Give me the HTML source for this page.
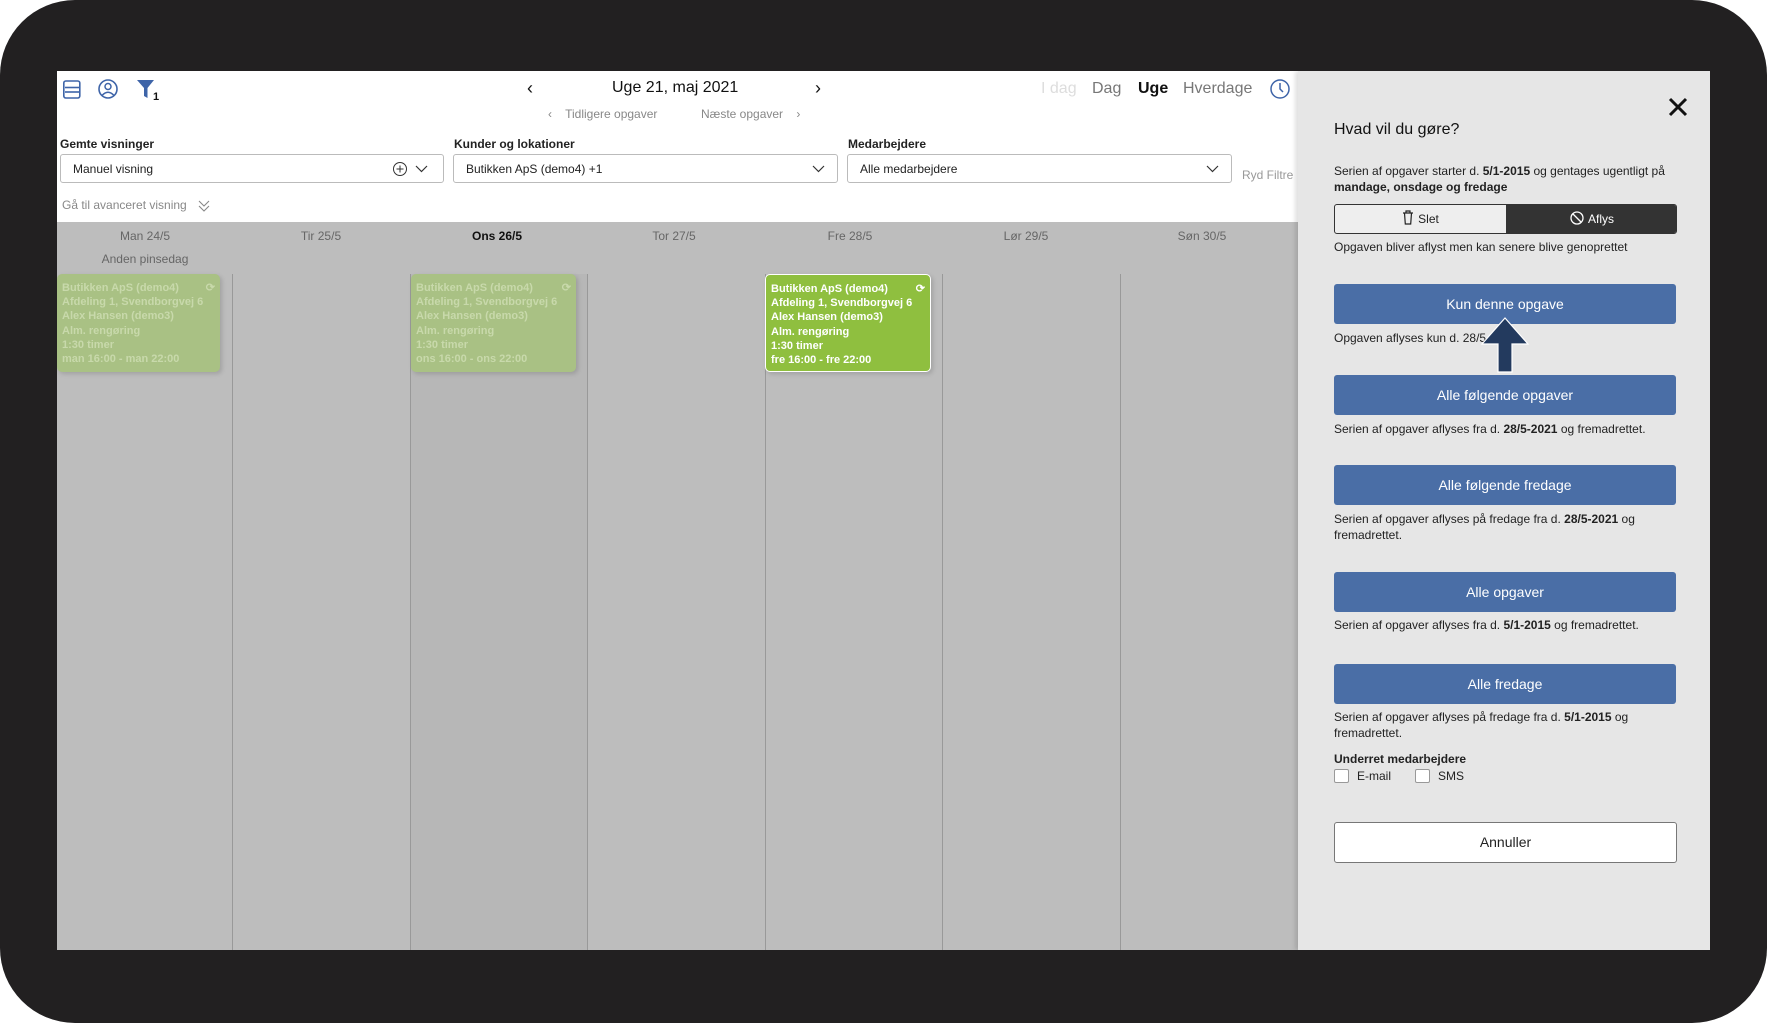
<!DOCTYPE html>
<html><head><meta charset="utf-8">
<style>
*{box-sizing:border-box;margin:0;padding:0}
body{width:1767px;height:1023px;background:#fff;position:relative;overflow:hidden;font-family:"Liberation Sans",sans-serif;color:#222}
.frame{position:absolute;left:0;top:0;width:1767px;height:1023px;background:#222021;border-radius:75px}
.abs{position:absolute;white-space:nowrap}
.screen{position:absolute;left:57px;top:71px;width:1653px;height:879px;background:#fff;overflow:hidden}
.main{position:absolute;left:0;top:0;width:1241px;height:879px;background:#fff}
.cal{position:absolute;left:0;top:151px;width:1241px;height:728px;background:#bdbdbd}
.lbl{font-size:12px;font-weight:bold;color:#222}
.sel{position:absolute;top:83px;height:29px;border:1px solid #bbb;border-radius:3px;background:#fff;font-size:12px;padding:7px 12px;color:#222}
.chev{position:absolute;right:10px;top:6px}
.day{position:absolute;top:158px;width:176px;text-align:center;font-size:12px;color:#666}
.div{position:absolute;top:203px;width:1px;height:676px;background:#999}
.ev{position:absolute;top:203px;height:98px;border-radius:5px;padding:7px 5px;font-size:11px;line-height:14.2px;font-weight:bold;white-space:nowrap;overflow:hidden;box-shadow:2px 2px 5px rgba(0,0,0,.15)}
.fade{background:#a9c184;color:#c8d9ab}
.act{background:#8fbf3f;color:#fff;border:1px solid #fff}
.side{position:absolute;left:1241px;top:0;width:412px;height:879px;background:#e6e6e6;box-shadow:-3px 0 4px rgba(0,0,0,.12)}
.st{font-size:12px;color:#222;position:absolute;left:36px;white-space:nowrap;line-height:16px}
.btn{position:absolute;left:36px;width:342px;height:40px;background:#4a6ea6;border-radius:3px;color:#fff;font-size:14px;text-align:center;line-height:40px}
</style></head><body>
<div class="frame"></div>
<div class="screen">
<div class="main">
 <svg class="abs" style="left:6px;top:8px" width="100" height="24">
  <rect x="0.8" y="2" width="16" height="17" rx="2" fill="none" stroke="#3e64a8" stroke-width="1.6"/>
  <line x1="2" y1="8.5" x2="16" y2="8.5" stroke="#3e64a8" stroke-width="1.6"/><line x1="2" y1="13" x2="16" y2="13" stroke="#3e64a8" stroke-width="1.6"/>
  <circle cx="45" cy="10" r="9" fill="none" stroke="#3e64a8" stroke-width="1.6"/>
  <circle cx="45" cy="7.5" r="3" fill="none" stroke="#3e64a8" stroke-width="1.5"/>
  <path d="M39 16.5 Q45 10 51 16.5" fill="none" stroke="#3e64a8" stroke-width="1.5"/>
  <path d="M74 1 H91 L84.5 9 V19 L81 17 V9 Z" fill="#3e64a8"/>
  <text x="90" y="21" font-size="11" font-weight="bold" fill="#111" font-family="Liberation Sans">1</text>
 </svg>
 <div class="abs" style="left:470px;top:7px;font-size:18px;color:#111">‹</div>
 <div class="abs" style="left:555px;top:8px;font-size:16px;color:#111">Uge 21, maj 2021</div>
 <div class="abs" style="left:758px;top:7px;font-size:18px;color:#111">›</div>
 <div class="abs" style="left:491px;top:36px;font-size:12px;color:#888">‹&nbsp;&nbsp;&nbsp; Tidligere opgaver</div>
 <div class="abs" style="left:644px;top:36px;font-size:12px;color:#888">Næste opgaver &nbsp;&nbsp;&nbsp;›</div>
 <div class="abs" style="left:984px;top:9px;font-size:16px;color:#ddd">I dag</div>
 <div class="abs" style="left:1035px;top:9px;font-size:16px;color:#777">Dag</div>
 <div class="abs" style="left:1081px;top:9px;font-size:16px;color:#111;font-weight:bold">Uge</div>
 <div class="abs" style="left:1126px;top:9px;font-size:16px;color:#777">Hverdage</div>
 <svg class="abs" style="left:1212px;top:7px" width="22" height="22"><circle cx="11" cy="11" r="9" fill="none" stroke="#3e64a8" stroke-width="1.5"/><path d="M11 5 V11 L14 14" fill="none" stroke="#3e64a8" stroke-width="1.5"/></svg>
 <div class="abs lbl" style="left:3px;top:66px">Gemte visninger</div>
 <div class="abs lbl" style="left:397px;top:66px">Kunder og lokationer</div>
 <div class="abs lbl" style="left:791px;top:66px">Medarbejdere</div>
 <div class="sel" style="left:3px;width:384px">Manuel visning
  <svg class="chev" width="40" height="16"><circle cx="7" cy="8" r="6.5" fill="none" stroke="#333" stroke-width="1"/><path d="M7 4.5V11.5M3.5 8H10.5" stroke="#333"/><path d="M23 5 L28.5 10.5 L34 5" fill="none" stroke="#333" stroke-width="1.2"/></svg></div>
 <div class="sel" style="left:396px;width:385px">Butikken ApS (demo4) +1
  <svg class="chev" width="16" height="16"><path d="M2 5 L7.5 10.5 L13 5" fill="none" stroke="#333" stroke-width="1.2"/></svg></div>
 <div class="sel" style="left:790px;width:385px">Alle medarbejdere
  <svg class="chev" width="16" height="16"><path d="M2 5 L7.5 10.5 L13 5" fill="none" stroke="#333" stroke-width="1.2"/></svg></div>
 <div class="abs" style="left:1185px;top:97px;font-size:12px;color:#999">Ryd Filtre</div>
 <div class="abs" style="left:5px;top:127px;font-size:12px;color:#888">Gå til avanceret visning</div>
 <svg class="abs" style="left:140px;top:128px" width="14" height="14"><path d="M2 2 L7 7 L12 2 M2 7 L7 12 L12 7" fill="none" stroke="#888" stroke-width="1.1"/></svg>
 <div class="cal">
  <div style="position:absolute;left:354px;top:52px;width:177px;height:676px;background:#b7b7b7"></div>
 </div>
 <div class="day" style="left:0">Man 24/5</div>
 <div class="day" style="left:176px">Tir 25/5</div>
 <div class="day" style="left:352px;color:#111;font-weight:bold">Ons 26/5</div>
 <div class="day" style="left:529px">Tor 27/5</div>
 <div class="day" style="left:705px">Fre 28/5</div>
 <div class="day" style="left:881px">Lør 29/5</div>
 <div class="day" style="left:1057px">Søn 30/5</div>
 <div class="day" style="left:0;top:181px">Anden pinsedag</div>
 <div class="div" style="left:175px"></div><div class="div" style="left:353px"></div><div class="div" style="left:530px"></div>
 <div class="div" style="left:708px"></div><div class="div" style="left:885px"></div><div class="div" style="left:1063px"></div>
 <div class="ev fade" style="left:0;width:163px">Butikken ApS (demo4)<span style="float:right">⟳</span><br>Afdeling 1, Svendborgvej 6<br>Alex Hansen (demo3)<br>Alm. rengøring<br>1:30 timer<br>man 16:00 - man 22:00</div>
 <div class="ev fade" style="left:354px;width:165px">Butikken ApS (demo4)<span style="float:right">⟳</span><br>Afdeling 1, Svendborgvej 6<br>Alex Hansen (demo3)<br>Alm. rengøring<br>1:30 timer<br>ons 16:00 - ons 22:00</div>
 <div class="ev act" style="left:708px;width:166px">Butikken ApS (demo4)<span style="float:right">⟳</span><br>Afdeling 1, Svendborgvej 6<br>Alex Hansen (demo3)<br>Alm. rengøring<br>1:30 timer<br>fre 16:00 - fre 22:00</div>
</div>
<div class="side">
 <svg class="abs" style="left:370px;top:26px" width="20" height="20"><path d="M2 2L18 18M18 2L2 18" stroke="#111" stroke-width="3"/></svg>
 <div class="abs" style="left:36px;top:50px;font-size:16px;color:#111">Hvad vil du gøre?</div>
 <div class="st" style="top:92px">Serien af opgaver starter d. <b>5/1-2015</b> og gentages ugentligt på</div>
 <div class="st" style="top:108px"><b>mandage, onsdage og fredage</b></div>
 <div class="abs" style="left:36px;top:133px;width:343px;height:30px;border:1px solid #333;border-radius:3px;overflow:hidden;background:#eee">
  <div style="position:absolute;left:171px;top:0;width:172px;height:30px;background:#333;color:#fff;font-size:12px;line-height:29px;text-align:center"><svg width="14" height="14" style="vertical-align:-2px;margin-right:4px"><circle cx="7" cy="7" r="6" fill="none" stroke="#fff" stroke-width="1.3"/><path d="M3 3L11 11" stroke="#fff" stroke-width="1.3"/></svg>Aflys</div>
  <div style="position:absolute;left:0;top:0;width:171px;height:30px;font-size:12px;line-height:29px;text-align:center"><svg width="12" height="15" style="vertical-align:-2px;margin-right:4px"><path d="M1 3H11M4 3V1H8V3M2.5 3L3.3 14H8.7L9.5 3" fill="none" stroke="#222" stroke-width="1.2"/></svg>Slet</div>
 </div>
 <div class="st" style="top:168px">Opgaven bliver aflyst men kan senere blive genoprettet</div>
 <div class="btn" style="top:213px">Kun denne opgave</div>
 <div class="st" style="top:259px">Opgaven aflyses kun d. 28/5</div>
 <div class="btn" style="top:304px">Alle følgende opgaver</div>
 <div class="st" style="top:350px">Serien af opgaver aflyses fra d. <b>28/5-2021</b> og fremadrettet.</div>
 <div class="btn" style="top:394px">Alle følgende fredage</div>
 <div class="st" style="top:440px">Serien af opgaver aflyses på fredage fra d. <b>28/5-2021</b> og<br>fremadrettet.</div>
 <div class="btn" style="top:501px">Alle opgaver</div>
 <div class="st" style="top:546px">Serien af opgaver aflyses fra d. <b>5/1-2015</b> og fremadrettet.</div>
 <div class="btn" style="top:593px">Alle fredage</div>
 <div class="st" style="top:638px">Serien af opgaver aflyses på fredage fra d. <b>5/1-2015</b> og<br>fremadrettet.</div>
 <div class="st" style="top:680px"><b>Underret medarbejdere</b></div>
 <div class="abs" style="left:36px;top:698px;width:15px;height:14px;border:1px solid #999;border-radius:2px;background:#fff"></div>
 <div class="st" style="left:59px;top:697px">E-mail</div>
 <div class="abs" style="left:117px;top:698px;width:15px;height:14px;border:1px solid #999;border-radius:2px;background:#fff"></div>
 <div class="st" style="left:140px;top:697px">SMS</div>
 <div class="abs" style="left:36px;top:751px;width:343px;height:41px;border:1px solid #777;border-radius:3px;background:#fff;font-size:14px;text-align:center;line-height:39px">Annuller</div>
 <svg class="abs" style="left:182px;top:246px" width="50" height="56"><path d="M25 1 L48 27 H32 V55 H18 V27 H2 Z" fill="#233a5e" stroke="#fff" stroke-width="1.2"/></svg>
</div>
</div>
</body></html>
